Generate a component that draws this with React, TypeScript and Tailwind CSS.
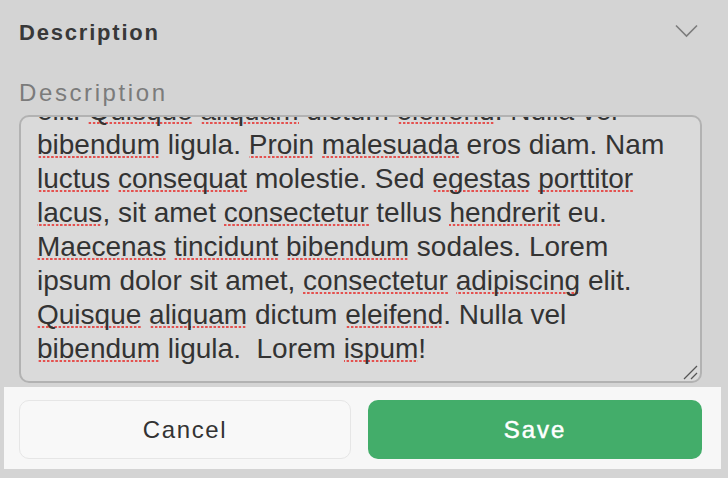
import React from 'react';

type Seg = [string, boolean?];

const LINES: Seg[][] = [
  [['elit. '], ['Quisque', true], [' '], ['aliquam', true], [' dictum '], ['eleifend', true], ['. Nulla vel']],
  [['bibendum', true], [' ligula. '], ['Proin', true], [' '], ['malesuada', true], [' eros diam. Nam']],
  [['luctus', true], [' '], ['consequat', true], [' molestie. Sed '], ['egestas', true], [' '], ['porttitor', true]],
  [['lacus', true], [', sit amet '], ['consectetur', true], [' tellus '], ['hendrerit', true], [' eu.']],
  [['Maecenas', true], [' '], ['tincidunt', true], [' '], ['bibendum', true], [' sodales. Lorem']],
  [['ipsum dolor sit amet, '], ['consectetur', true], [' '], ['adipiscing', true], [' elit.']],
  [['Quisque', true], [' '], ['aliquam', true], [' dictum '], ['eleifend', true], ['. Nulla vel']],
  [['bibendum', true], [' ligula.  Lorem '], ['ispum', true], ['!']],
];

// spell-check style dotted underline
const misspelledCls =
  'bg-[radial-gradient(circle_at_2px_3px,#e4514f_1.1px,transparent_1.5px)] bg-[length:4.2px_6px] bg-repeat-x bg-bottom';

function Line({ segs }: { segs: Seg[] }) {
  return (
    <div className="whitespace-pre h-[34px]">
      {segs.map(([text, misspelled], i) => (
        <span key={i} className={misspelled ? misspelledCls : undefined}>
          {text}
        </span>
      ))}
    </div>
  );
}

export default function App() {
  return (
    <div className="w-[728px] h-[478px] bg-[#d4d4d4] overflow-hidden font-['Liberation_Sans',Arial,sans-serif]">
      <div className="px-[19px]">
        <div className="flex items-start justify-between pt-[19px]">
          <h2 className="text-[22px] leading-[28px] font-bold tracking-[1.8px] text-[#383838]">Description</h2>
          <svg width="23" height="14" viewBox="0 0 23 14" className="mr-[11px] mt-[5px]" fill="none">
            <polyline points="1,1.5 11.5,12 22,1.5" stroke="#7c7c7c" strokeWidth="1.6" />
          </svg>
        </div>
        <div className="mt-[32px] text-[24px] leading-[28px] tracking-[2.6px] text-[#7b7b7b]">Description</div>
        <div className="relative mt-[8px] w-[683px] h-[268px] rounded-[10px] border-2 border-[#b2b2b2] bg-[#dadada] overflow-hidden">
          <div className="-mt-[23px] pl-[16px] text-[28px] leading-[34px] text-[#333]">
            {LINES.map((segs, i) => (
              <Line key={i} segs={segs} />
            ))}
          </div>
          <svg width="16" height="16" viewBox="0 0 16 16" className="absolute right-[2px] bottom-[1px]" fill="none">
            <line x1="2" y1="15" x2="15" y2="2" stroke="#555" strokeWidth="1.2" />
            <line x1="9" y1="15" x2="15" y2="9" stroke="#555" strokeWidth="1.2" />
          </svg>
        </div>
      </div>
      <div className="mt-[4px] ml-[4px] w-[717px] h-[82px] bg-[#f7f7f7] flex gap-[17px] pl-[15px] pt-[13px]">
        <button className="w-[332px] h-[59px] rounded-[10px] border border-[#e6e6e6] bg-[#f8f8f8] text-[24px] tracking-[1.6px] text-[#333]">
          Cancel
        </button>
        <button className="w-[334px] h-[59px] rounded-[10px] bg-[#43ad6a] text-[24px] tracking-[2px] text-white [-webkit-text-stroke:0.5px_white]">
          Save
        </button>
      </div>
    </div>
  );
}
